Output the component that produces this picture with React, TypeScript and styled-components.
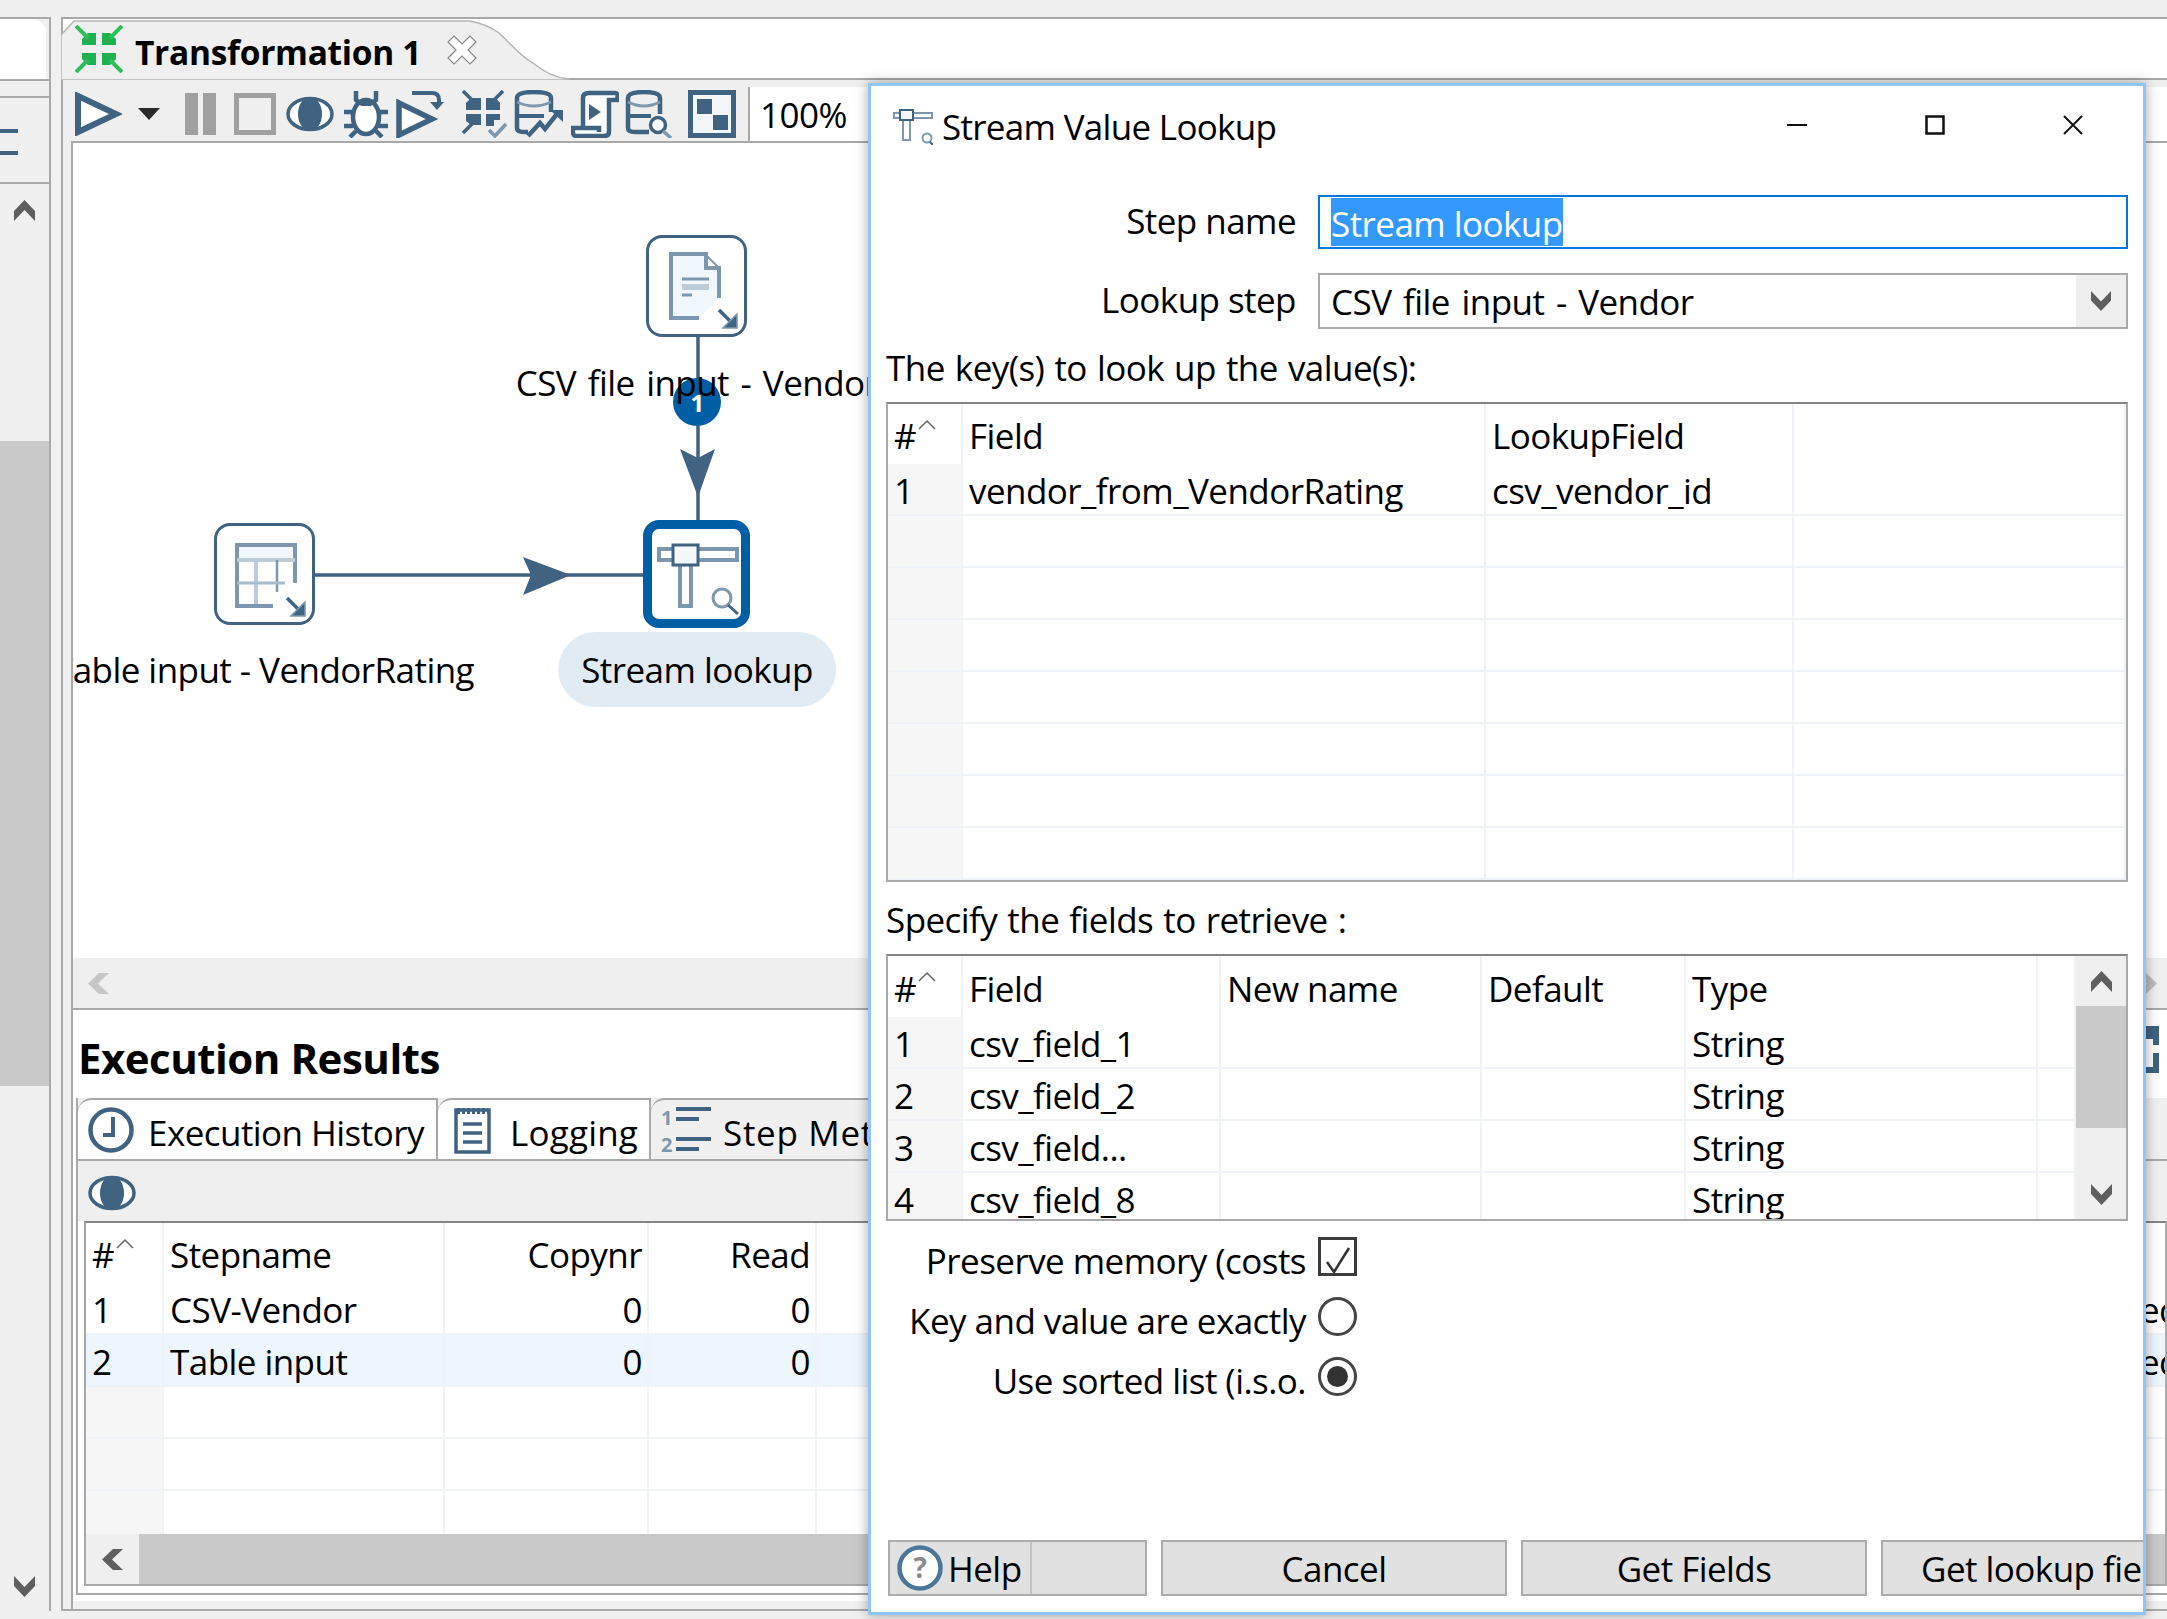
import React from "react";
import styled, { createGlobalStyle } from "styled-components";

const STEEL = "#3f6380";
const PALE = "#7d98ae";
const LINE = "#a9a9a9";
const SOFT = "#eff2f6";

const GlobalStyle = createGlobalStyle`
  html, body {
    margin: 0;
    padding: 0;
    overflow: hidden;
    background: #f0f0f0;
  }
  * {
    box-sizing: border-box;
  }
  body {
    font-family: "Open Sans", "Noto Sans", sans-serif;
    font-size: 35px;
    letter-spacing: -0.55px;
    color: #000;
  }
`;

const Screen = styled.div`
  position: relative;
  width: 2167px;
  height: 1619px;
  display: flex;
  padding: 17px 0 8px;
  overflow: hidden;
  background: #f0f0f0;
`;

/* left rail */
const Sidebar = styled.div`
  width: 51px;
  margin-right: 10px;
  display: flex;
  flex-direction: column;
  border-right: 2px solid ${LINE};
  border-top: 2px solid ${LINE};
  flex: none;
`;

const SideTab = styled.div`
  height: 60px;
  width: 46px;
  background: #fff;
  border-top-right-radius: 14px;
`;

const SideBand = styled.div`
  height: 19px;
  border-top: 2px solid ${LINE};
  border-bottom: 2px solid ${LINE};
`;

const SideBars = styled.div`
  height: 86px;
  padding-top: 31px;
  display: flex;
  flex-direction: column;
  gap: 18px;
  border-bottom: 2px solid ${LINE};
`;

const SideBar = styled.div`
  width: 18px;
  height: 4px;
  background: ${STEEL};
`;

const SideScroll = styled.div`
  flex: 1;
  display: flex;
  flex-direction: column;
  align-items: center;
  padding: 16px 0 14px;
`;

const SideThumb = styled.div`
  width: 100%;
  height: 645px;
  margin-top: 220px;
  background: #c9c9c9;
`;

const Push = styled.div`
  flex: 1;
`;

/* main perspective */
const Main = styled.div`
  flex: 1;
  min-width: 0;
  display: flex;
  flex-direction: column;
  border-top: 2px solid ${LINE};
  border-left: 2px solid ${LINE};
  border-bottom: 2px solid ${LINE};
`;

const TabStrip = styled.div`
  position: relative;
  height: 61px;
  flex: none;
  background: #fff;
  border-bottom: 2px solid ${LINE};
`;

const TabShape = styled.svg`
  position: absolute;
  left: -2px;
  top: 0;
`;

const TabLabel = styled.div`
  position: relative;
  height: 59px;
  display: flex;
  align-items: center;
  padding-left: 12px;
`;

const TabTitle = styled.span`
  margin: 7px 0 0 12px;
  font-weight: 700;
  font-size: 33.5px;
  letter-spacing: -0.3px;
`;

const TabClose = styled.svg`
  margin-left: 26px;
  margin-top: 2px;
`;

const Toolbar = styled.div`
  height: 61px;
  flex: none;
  display: flex;
  align-items: center;
  padding: 7px 0 0 12px;
  background: #efefef;
`;

const ToolSlot = styled.div<{ $gap: number }>`
  margin-left: ${(p) => p.$gap}px;
  display: flex;
  align-items: center;
`;

const ZoomBox = styled.div`
  flex: 1;
  height: 100%;
  margin-left: 12px;
  padding-left: 10px;
  display: flex;
  align-items: center;
  background: #fff;
  border-left: 2px solid ${LINE};
`;

const Editor = styled.div`
  flex: 1;
  min-height: 0;
  margin-left: 8px;
  display: flex;
  flex-direction: column;
  border-top: 2px solid ${LINE};
  border-left: 2px solid ${LINE};
`;

/* graph canvas */
const Canvas = styled.div`
  position: relative;
  height: 815px;
  flex: none;
  background: #fff;
  overflow: hidden;
`;

const Wires = styled.svg`
  position: absolute;
  left: 0;
  top: 0;
`;

const StepBox = styled.div<{ $x: number; $y: number; $active?: boolean }>`
  position: absolute;
  left: ${(p) => p.$x}px;
  top: ${(p) => p.$y}px;
  width: ${(p) => (p.$active ? 107 : 101)}px;
  height: ${(p) => (p.$active ? 108 : 102)}px;
  border-radius: 16px;
  background: #fff;
  border: ${(p) => (p.$active ? `9px solid #005ea4` : `3px solid ${STEEL}`)};
`;

const StepGlyph = styled.svg`
  position: absolute;
  left: 0;
  top: 0;
  display: block;
`;

const StepLabel = styled.div<{ $x: number; $y: number; $pill?: boolean; $wide?: boolean }>`
  position: absolute;
  left: ${(p) => p.$x}px;
  top: ${(p) => p.$y}px;
  transform: translateX(-50%);
  height: 75px;
  padding: 0 23px;
  display: flex;
  align-items: center;
  white-space: nowrap;
  word-spacing: ${(p) => (p.$wide ? 3 : 0)}px;
  border-radius: 38px;
  background: ${(p) => (p.$pill ? "#e1ebf4" : "transparent")};
`;

const HopBadge = styled.div`
  position: absolute;
  left: 600px;
  top: 235px;
  width: 48px;
  height: 48px;
  border-radius: 50%;
  background: #005ea4;
  color: #fff;
  font-size: 24px;
  font-weight: 700;
  display: flex;
  align-items: center;
  justify-content: center;
`;

const HScroll = styled.div`
  height: 50px;
  flex: none;
  padding: 0 10px 0 15px;
  display: flex;
  align-items: center;
  justify-content: space-between;
  background: #efefef;
`;

/* execution results */
const Results = styled.div`
  flex: 1;
  min-height: 0;
  margin-bottom: 8px;
  display: flex;
  flex-direction: column;
  padding: 0 0 6px 3px;
  background: #fff;
  border-top: 2px solid ${LINE};
`;

const ResultsHead = styled.div`
  height: 88px;
  flex: none;
  display: flex;
  align-items: center;
  justify-content: space-between;
  padding: 0 8px 0 2px;
`;

const ResultsTitle = styled.h2`
  margin: 7px 0 0;
  font-size: 42px;
  font-weight: 700;
  letter-spacing: -0.5px;
`;

const MaxIcon = styled.svg`
  margin-bottom: 9px;
`;

const ResultsFrame = styled.div`
  flex: 1;
  min-height: 0;
  display: flex;
  flex-direction: column;
  border-left: 2px solid ${LINE};
  border-bottom: 2px solid ${LINE};
  padding-bottom: 7px;
`;

const ResultTabs = styled.div`
  height: 63px;
  flex: none;
  display: flex;
  background: #f0f0f0;
  border-bottom: 2px solid ${LINE};
`;

const ResultTab = styled.div<{ $w: number; $pad: number; $gap: number; $on?: boolean }>`
  width: ${(p) => p.$w}px;
  flex: none;
  display: flex;
  align-items: center;
  gap: ${(p) => p.$gap}px;
  padding-left: ${(p) => p.$pad}px;
  background: ${(p) => (p.$on ? "#fff" : "#f0f0f0")};
  border-top: 2px solid ${LINE};
  border-right: ${(p) => (p.$on ? `2px solid ${LINE}` : "none")};
  border-top-left-radius: 14px;
  white-space: nowrap;
`;

const TabText = styled.span<{ $spacing?: number }>`
  margin-top: 5px;
  letter-spacing: ${(p) => p.$spacing ?? -0.55}px;
`;

const ResultBar = styled.div`
  height: 60px;
  flex: none;
  padding: 4px 0 0 10px;
  display: flex;
  align-items: center;
  background: #efefef;
`;

/* tables */
const Table = styled.div<{ $h: number; $inset?: number; $stack?: boolean }>`
  height: ${(p) => p.$h}px;
  margin-left: ${(p) => p.$inset ?? 0}px;
  flex: none;
  display: flex;
  flex-direction: ${(p) => (p.$stack ? "column" : "row")};
  background: #fff;
  border: 2px solid ${LINE};
  border-top-color: #858585;
  overflow: hidden;
`;

const TableBody = styled.div`
  flex: 1;
  min-width: 0;
  min-height: 0;
  overflow: hidden;
`;

const Row = styled.div<{ $cols: string; $h: number; $on?: boolean }>`
  height: ${(p) => p.$h}px;
  display: grid;
  grid-template-columns: ${(p) => p.$cols};
  background: ${(p) => (p.$on ? "#edf6fd" : "transparent")};
`;

const Cell = styled.div<{ $right?: boolean; $index?: boolean; $head?: boolean }>`
  display: flex;
  align-items: center;
  justify-content: ${(p) => (p.$right ? "flex-end" : "flex-start")};
  padding: 3px 5px 0 6px;
  white-space: nowrap;
  overflow: hidden;
  border-right: 2px solid ${SOFT};
  border-bottom: ${(p) => (p.$head ? "none" : `2px solid ${SOFT}`)};
  background: ${(p) => (p.$index ? "#f6f6f6" : "transparent")};
`;

const SortMark = styled.svg`
  margin: 0 0 22px 2px;
`;

const VScroll = styled.div`
  width: 50px;
  flex: none;
  display: flex;
  flex-direction: column;
  align-items: center;
  background: #efefef;
`;

const VArrow = styled.div`
  height: 50px;
  flex: none;
  display: flex;
  align-items: center;
`;

const VThumb = styled.div`
  width: 100%;
  height: 122px;
  background: #c9c9c9;
`;

const TableHScroll = styled.div`
  height: 50px;
  flex: none;
  display: flex;
  background: #c9c9c9;
`;

const HArrow = styled.div`
  width: 53px;
  padding-left: 16px;
  display: flex;
  align-items: center;
  background: #efefef;
`;

/* dialog */
const Dialog = styled.div`
  position: absolute;
  left: 868px;
  top: 83px;
  width: 1278px;
  height: 1532px;
  display: flex;
  flex-direction: column;
  padding: 0 15px;
  overflow: hidden;
  background: #fff;
  border: 3px solid #8fc6f7;
  box-shadow: 0 0 12px rgba(0, 0, 0, 0.35);
`;

const DialogTitle = styled.div`
  height: 81px;
  flex: none;
  display: flex;
  align-items: center;
  padding-left: 7px;
  margin-bottom: 28px;
`;

const TitleText = styled.span`
  margin-left: 9px;
  letter-spacing: -0.7px;
`;

const WinButtons = styled.div`
  margin: 0 44px 4px auto;
  display: flex;
  align-items: center;
  gap: 117px;
`;

const FormRow = styled.div<{ $h: number; $mb: number }>`
  height: ${(p) => p.$h}px;
  margin-bottom: ${(p) => p.$mb}px;
  flex: none;
  display: grid;
  grid-template-columns: 420px 1fr;
  column-gap: 12px;
`;

const FormLabel = styled.div<{ $inset?: number; $lift?: number }>`
  display: flex;
  align-items: center;
  justify-content: flex-end;
  padding: 0 ${(p) => p.$inset ?? 0}px ${(p) => p.$lift ?? 3}px 0;
  white-space: nowrap;
`;

const TextBox = styled.div`
  display: flex;
  align-items: center;
  padding-left: 11px;
  border: 2px solid #0078d7;
`;

const Selected = styled.span`
  height: 48px;
  padding-top: 2px;
  display: flex;
  align-items: center;
  background: #3399ff;
  color: #fff;
`;

const Combo = styled.div`
  display: flex;
  align-items: center;
  justify-content: space-between;
  padding-left: 11px;
  word-spacing: 3px;
  border: 2px solid ${LINE};
`;

const ComboArrow = styled.div`
  width: 50px;
  height: 100%;
  display: flex;
  align-items: center;
  justify-content: center;
  background: #efefef;
`;

const SectionLabel = styled.div<{ $h: number; $top: number }>`
  height: ${(p) => p.$h}px;
  padding-top: ${(p) => p.$top}px;
  flex: none;
  display: flex;
  align-items: center;
  white-space: nowrap;
  word-spacing: 1.5px;
`;

const Options = styled.div`
  margin-top: 16px;
  flex: none;
  display: flex;
  flex-direction: column;
  gap: 21px;
`;

const OptionRow = styled.div`
  height: 39px;
  display: grid;
  grid-template-columns: 420px 40px;
  column-gap: 12px;
`;

const Check = styled.div`
  width: 39px;
  height: 39px;
  border: 3px solid #3c3c3c;
`;

const Radio = styled.div<{ $on?: boolean }>`
  width: 39px;
  height: 39px;
  border: 3px solid #454545;
  border-radius: 50%;
  display: flex;
  align-items: center;
  justify-content: center;
  &::after {
    content: "";
    width: 21px;
    height: 21px;
    border-radius: 50%;
    background: ${(p) => (p.$on ? "#333" : "transparent")};
  }
`;

const ButtonRow = styled.div`
  margin: auto 0 16px 2px;
  height: 56px;
  flex: none;
  display: flex;
  gap: 14px;
`;

const Button = styled.div<{ $w: number }>`
  width: ${(p) => p.$w}px;
  flex: none;
  display: flex;
  align-items: center;
  justify-content: center;
  white-space: nowrap;
  background: #e1e1e1;
  border: 2px solid #adadad;
`;

const HelpPart = styled.div`
  width: 142px;
  height: 100%;
  margin-right: auto;
  padding-left: 7px;
  display: flex;
  align-items: center;
  gap: 5px;
  border-right: 2px solid #c4c4c4;
`;

const ChevronSvg = styled.svg<{ $turn: number }>`
  display: block;
  transform: rotate(${(p) => p.$turn}deg);
`;

/* icons */
const Chevron = ({ dir = "up", color = "#5f5f5f", size = 21 }: { dir?: "up" | "down" | "left" | "right"; color?: string; size?: number }) => {
  const turn = { up: 0, down: 180, left: 270, right: 90 }[dir];
  return (
    <ChevronSvg $turn={turn} width={size} height={size} viewBox="0 0 21 21">
      <path d="M10.5 0 L21 11 V21 L10.5 10 L0 21 V11 Z" fill={color} />
    </ChevronSvg>
  );
};

const Sort = () => (
  <SortMark width="18" height="12" viewBox="0 0 18 12">
    <path d="M1 10 L9 2 L17 10" fill="none" stroke="#666" strokeWidth="1.5" />
  </SortMark>
);

const Logo = () => (
  <svg width="48" height="48" viewBox="0 0 48 48">
    <path
      d="M13 8 H21 V20 H7 V14Z M27 8 H35 L41 14 V20 H27Z M7 28 H21 V40 H13 L7 34Z M27 28 H41 V34 L35 40 H27Z"
      fill="#1fb14f"
    />
    <path d="M1 1 L13 13 M47 1 L35 13 M1 47 L13 35 M47 47 L35 35" stroke="#2cbf5c" strokeWidth="4" fill="none" />
  </svg>
);

const RunIcon = () => (
  <svg width="47" height="44" viewBox="0 0 47 44">
    <path d="M3 4 L41 22 L3 40Z" fill="#fff" stroke={STEEL} strokeWidth="6" />
  </svg>
);

const DropIcon = () => (
  <svg width="22" height="12" viewBox="0 0 22 12">
    <path d="M0 0 H22 L11 12Z" fill="#2b2b2b" />
  </svg>
);

const PauseIcon = () => (
  <svg width="31" height="42" viewBox="0 0 31 42">
    <path d="M0 0 H13 V42 H0Z M18 0 H31 V42 H18Z" fill="#a0a0a0" />
  </svg>
);

const StopIcon = () => (
  <svg width="42" height="42" viewBox="0 0 42 42">
    <rect x="2.5" y="2.5" width="37" height="37" fill="none" stroke="#a0a0a0" strokeWidth="5" />
  </svg>
);

const EyeIcon = () => (
  <svg width="48" height="36" viewBox="0 0 48 36">
    <ellipse cx="24" cy="18" rx="22" ry="15.5" fill="#fff" stroke={STEEL} strokeWidth="3.5" />
    <ellipse cx="24" cy="18" rx="12" ry="17" fill={STEEL} />
  </svg>
);

const BugIcon = () => (
  <svg width="48" height="48" viewBox="0 0 48 48">
    <g stroke={STEEL} strokeWidth="4.5" fill="none">
      <path d="M14 1 V10 L19 14 M34 1 V10 L29 14 M2 22 H9 L13 26 M46 22 H39 L35 26 M2 36 H10 L14 33 M46 36 H38 L34 33 M8 47 L14 41 M40 47 L34 41" />
    </g>
    <ellipse cx="24" cy="27" rx="13" ry="17" fill="#fff" stroke={STEEL} strokeWidth="4.5" />
    <path d="M16 13 Q24 3 32 13 L29 16 H19Z" fill={STEEL} />
  </svg>
);

const StepRunIcon = () => (
  <svg width="48" height="48" viewBox="0 0 48 48">
    <path d="M3 13 L36 29 L3 45Z" fill="#fff" stroke={STEEL} strokeWidth="5.5" />
    <path d="M16 3 H36 Q43 3 43 10 V14" fill="none" stroke={STEEL} strokeWidth="4" />
    <path d="M34 12 H48 L41 20Z" fill={STEEL} />
  </svg>
);

const CheckIcon = () => (
  <svg width="46" height="48" viewBox="0 0 46 48">
    <path d="M9 8 H19 V20 H4 V13Z M24 8 H34 L38 13 V20 H24Z M4 24 H19 V35 H9 L4 31Z M24 24 H38 V30 H32 V36 H24Z" fill={STEEL} />
    <path d="M1 1 L11 11 M41 1 L31 11 M1 43 L11 33" stroke={STEEL} strokeWidth="3.5" fill="none" />
    <path d="M27 40 L33 46 L44 34" stroke={PALE} strokeWidth="3.5" fill="none" />
  </svg>
);

const DbArrowIcon = () => (
  <svg width="49" height="48" viewBox="0 0 49 48">
    <path d="M3 8 Q3 2 20 2 Q37 2 37 8 V22 M3 8 V38 Q3 42 10 42 H14" fill="none" stroke={STEEL} strokeWidth="4.5" />
    <path d="M3 12 Q20 20 37 12" fill="none" stroke={PALE} strokeWidth="3" />
    <path d="M4 26 H30" stroke={STEEL} strokeWidth="4" />
    <path d="M14 46 L26 33 L31 39 L43 24" fill="none" stroke={STEEL} strokeWidth="4.5" />
    <path d="M36 20 H49 V32Z" fill={STEEL} />
  </svg>
);

const ScriptIcon = () => (
  <svg width="48" height="48" viewBox="0 0 48 48">
    <path d="M12 36 V8 Q12 3 18 3 H44 Q48 3 46 10 H38 V42 Q38 46 33 46 H5 Q1 46 2 38 H28 V42" fill="#fff" stroke={STEEL} strokeWidth="4.5" />
    <path d="M18 14 L30 22 L18 30Z" fill={STEEL} />
  </svg>
);

const DbFindIcon = () => (
  <svg width="48" height="48" viewBox="0 0 48 48">
    <path d="M3 8 Q3 2 19 2 Q35 2 35 8 V24 M3 8 V38 Q3 42 10 42 H24" fill="none" stroke={STEEL} strokeWidth="4.5" />
    <path d="M3 12 Q19 20 35 12" fill="none" stroke={PALE} strokeWidth="3" />
    <path d="M4 26 H26" stroke={STEEL} strokeWidth="4" />
    <circle cx="33" cy="35" r="7.5" fill="#fff" stroke={STEEL} strokeWidth="3.5" />
    <path d="M38 41 L46 48" stroke={PALE} strokeWidth="3.5" />
  </svg>
);

const GridIcon = () => (
  <svg width="48" height="48" viewBox="0 0 48 48">
    <rect x="2.5" y="2.5" width="43" height="43" fill="#f3f6f9" stroke={STEEL} strokeWidth="5" />
    <rect x="9" y="9" width="15" height="15" fill={STEEL} />
    <rect x="25" y="25" width="15" height="15" fill={STEEL} />
  </svg>
);

const ClockIcon = () => (
  <svg width="46" height="48" viewBox="0 0 46 48">
    <circle cx="23" cy="24" r="20.5" fill="#fff" stroke={STEEL} strokeWidth="4.5" />
    <path d="M25 11 V29 H15" fill="none" stroke={STEEL} strokeWidth="4" />
  </svg>
);

const LogIcon = () => (
  <svg width="37" height="48" viewBox="0 0 37 48">
    <rect x="2" y="4" width="33" height="42" fill="#fff" stroke={STEEL} strokeWidth="3.5" />
    <path d="M3 5 H34" stroke={STEEL} strokeWidth="6" strokeDasharray="3 2" />
    <path d="M9 18 H28 M9 27 H28 M9 36 H28" stroke={STEEL} strokeWidth="3.5" />
  </svg>
);

const MetricsIcon = () => (
  <svg width="50" height="50" viewBox="0 0 50 50">
    <text x="0" y="20" fontSize="20" fontWeight="700" fill={PALE} fontFamily="Open Sans">1</text>
    <text x="0" y="47" fontSize="20" fontWeight="700" fill={PALE} fontFamily="Open Sans">2</text>
    <path d="M15 4 H50" stroke={STEEL} strokeWidth="4" />
    <path d="M15 14 H38" stroke={STEEL} strokeWidth="4" />
    <path d="M15 34 H50" stroke={STEEL} strokeWidth="4" />
    <path d="M15 44 H38" stroke={STEEL} strokeWidth="4" />
  </svg>
);

const CornerArrow = ({ x, y }: { x: number; y: number }) => (
  <g transform={`translate(${x} ${y})`}>
    <path d="M1 1 L15 15" stroke={STEEL} strokeWidth="3.5" />
    <path d="M5 19 H19 V5 Z" fill={STEEL} stroke={PALE} strokeWidth="1.5" />
  </g>
);

const CsvGlyph = () => (
  <StepGlyph width="96" height="96" viewBox="0 0 96 96">
    <path d="M22 16 H57 V30 H70 V60 L50 81 H22Z" fill="#f0f8fe" />
    <path d="M50 80 H22 V16 H57 V30 H70 V60" fill="none" stroke={PALE} strokeWidth="4" />
    <path d="M57 17 L70 30" stroke={PALE} strokeWidth="2" />
    <path d="M33 41 H60" stroke={PALE} strokeWidth="3" />
    <path d="M33 49 H60" stroke="#bccdd9" strokeWidth="6" />
    <path d="M33 57 H43" stroke={PALE} strokeWidth="3" />
    <CornerArrow x={69} y={71} />
  </StepGlyph>
);

const TableGlyph = () => (
  <StepGlyph width="96" height="96" viewBox="0 0 96 96">
    <rect x="19" y="19" width="59" height="14" fill="#f0f8fe" />
    <path d="M56 80 H20 V19 H78 V57" fill="none" stroke={PALE} strokeWidth="4" />
    <path d="M20 34 H78" stroke="#bccdd9" strokeWidth="4" />
    <path d="M39 34 V78" stroke="#bccdd9" strokeWidth="4" />
    <path d="M60 34 V66" stroke={PALE} strokeWidth="2.5" />
    <path d="M20 57 H68" stroke="#a9bccb" strokeWidth="3" />
    <CornerArrow x={69} y={71} />
  </StepGlyph>
);

const LookupGlyph = () => (
  <StepGlyph width="90" height="90" viewBox="0 0 90 90">
    <rect x="7" y="20" width="78" height="11" fill="#fff" stroke={PALE} strokeWidth="4" />
    <rect x="28" y="33" width="11" height="44" fill="#fff" stroke={PALE} strokeWidth="4" />
    <rect x="21" y="16" width="25" height="20" fill="#f4f8fb" stroke={STEEL} strokeWidth="3" />
    <circle cx="70" cy="69" r="9" fill="#fff" stroke={PALE} strokeWidth="3" />
    <path d="M76 76 L86 85" stroke={STEEL} strokeWidth="3" />
  </StepGlyph>
);

const TitleIcon = () => (
  <svg width="40" height="36" viewBox="0 0 40 36">
    <rect x="1" y="4" width="38" height="5" fill="#fff" stroke={PALE} strokeWidth="2" />
    <rect x="10" y="11" width="7" height="20" fill="#fff" stroke={PALE} strokeWidth="2" />
    <rect x="7" y="1" width="13" height="10" fill="#f4f8fb" stroke={STEEL} strokeWidth="2" />
    <circle cx="34" cy="29" r="4.5" fill="#fff" stroke={PALE} strokeWidth="2" />
    <path d="M37 33 L40 36" stroke={STEEL} strokeWidth="2" />
  </svg>
);

const HelpIcon = () => (
  <svg width="46" height="46" viewBox="0 0 46 46">
    <circle cx="23" cy="23" r="20.5" fill="#fff" stroke="#4c7696" strokeWidth="4.5" />
    <text x="23" y="33" textAnchor="middle" fontSize="28" fontWeight="700" fill="#8a8a8a" fontFamily="Open Sans">?</text>
  </svg>
);

const keyCols = "75px 523px 308px 1fr";
const fieldCols = "75px 258px 261px 204px 352px 1fr";
const runCols = "78px 281px 204px 168px 1317px 200px";

const keyRows = [["1", "vendor_from_VendorRating", "csv_vendor_id", ""], ...Array.from({ length: 7 }, () => ["", "", "", ""])];
const fieldRows = [
  ["1", "csv_field_1", "", "", "String", ""],
  ["2", "csv_field_2", "", "", "String", ""],
  ["3", "csv_field...", "", "", "String", ""],
  ["4", "csv_field_8", "", "", "String", ""],
];
const runRows = [
  ["1", "CSV-Vendor", "0", "0", "", "ed"],
  ["2", "Table input", "0", "0", "", "ed"],
  ["", "", "", "", "", ""],
  ["", "", "", "", "", ""],
  ["", "", "", "", "", ""],
];

const tools = [
  { gap: 0, icon: <RunIcon /> },
  { gap: 16, icon: <DropIcon /> },
  { gap: 25, icon: <PauseIcon /> },
  { gap: 18, icon: <StopIcon /> },
  { gap: 10, icon: <EyeIcon /> },
  { gap: 8, icon: <BugIcon /> },
  { gap: 6, icon: <StepRunIcon /> },
  { gap: 18, icon: <CheckIcon /> },
  { gap: 6, icon: <DbArrowIcon /> },
  { gap: 8, icon: <ScriptIcon /> },
  { gap: 6, icon: <DbFindIcon /> },
  { gap: 15, icon: <GridIcon /> },
];

const App = () => (
  <>
    <GlobalStyle />
    <Screen>
      <Sidebar>
        <SideTab />
        <SideBand />
        <SideBars>
          <SideBar />
          <SideBar />
        </SideBars>
        <SideScroll>
          <Chevron />
          <SideThumb />
          <Push />
          <Chevron dir="down" />
        </SideScroll>
      </Sidebar>

      <Main>
        <TabStrip>
          <TabShape width="520" height="61" viewBox="0 0 520 61">
            <path
              d="M0 61 V16 L13 2 H409 C420 4 430 8 438 14 C450 25 460 38 472 44 C485 54 495 59 508 60 V61Z"
              fill="#efefef"
              stroke="#b5b5b5"
              strokeWidth="1.5"
            />
          </TabShape>
          <TabLabel>
            <Logo />
            <TabTitle>Transformation 1</TabTitle>
            <TabClose width="30" height="30" viewBox="0 0 30 30">
              <path d="M7 1 L15 9 L23 1 L29 7 L21 15 L29 23 L23 29 L15 21 L7 29 L1 23 L9 15 L1 7Z" fill="#fff" stroke="#8a8a8a" strokeWidth="1.2" />
            </TabClose>
          </TabLabel>
        </TabStrip>
        <Toolbar>
          {tools.map((t, i) => (
            <ToolSlot key={i} $gap={t.gap}>
              {t.icon}
            </ToolSlot>
          ))}
          <ZoomBox>100%</ZoomBox>
        </Toolbar>

        <Editor>
          <Canvas>
            <Wires width="2094" height="815" viewBox="0 0 2094 815">
              <g stroke={STEEL} strokeWidth="3.5">
                <path d="M625 190 V380 M241 432 H575" />
              </g>
              <path d="M607 306 L625 315 L642 306 L625 354Z" fill={STEEL} />
              <path d="M450 414 L498 432 L450 452 L458 432Z" fill={STEEL} />
            </Wires>
            <StepBox $x={573} $y={92}>
              <CsvGlyph />
            </StepBox>
            <StepBox $x={141} $y={380}>
              <TableGlyph />
            </StepBox>
            <StepBox $x={570} $y={377} $active>
              <LookupGlyph />
            </StepBox>
            <HopBadge>1</HopBadge>
            <StepLabel $x={624} $y={202} $wide>CSV file input - Vendor</StepLabel>
            <StepLabel $x={191} $y={489}>Table input - VendorRating</StepLabel>
            <StepLabel $x={624} $y={489} $pill>Stream lookup</StepLabel>
          </Canvas>
          <HScroll>
            <Chevron dir="left" color="#c6c6c6" />
            <Chevron dir="right" color="#bcbcbc" />
          </HScroll>
          <Results>
            <ResultsHead>
              <ResultsTitle>Execution Results</ResultsTitle>
              <MaxIcon width="13" height="47" viewBox="0 0 13 47">
                <path d="M0 0 H13 V19 H7 V13 H0Z" fill={STEEL} />
                <path d="M7 27 H13 V47 H0 V41 H7Z" fill={STEEL} />
              </MaxIcon>
            </ResultsHead>
            <ResultsFrame>
              <ResultTabs>
                <ResultTab $w={360} $pad={10} $gap={14} $on>
                  <ClockIcon />
                  <TabText>Execution History</TabText>
                </ResultTab>
                <ResultTab $w={213} $pad={16} $gap={19} $on>
                  <LogIcon />
                  <TabText $spacing={0.2}>Logging</TabText>
                </ResultTab>
                <ResultTab $w={400} $pad={10} $gap={12}>
                  <MetricsIcon />
                  <TabText $spacing={0.7}>Step Metrics</TabText>
                </ResultTab>
              </ResultTabs>
              <ResultBar>
                <EyeIcon />
              </ResultBar>
              <Table $h={365} $inset={6} $stack>
                <TableBody>
                  <Row $cols={runCols} $h={60}>
                    <Cell $head>
                      #<Sort />
                    </Cell>
                    <Cell $head>Stepname</Cell>
                    <Cell $head $right>Copynr</Cell>
                    <Cell $head $right>Read</Cell>
                    <Cell $head />
                    <Cell $head />
                  </Row>
                  {runRows.map((r, i) => (
                    <Row key={i} $cols={runCols} $h={52} $on={i === 1}>
                      <Cell $index={!r[0]}>{r[0]}</Cell>
                      <Cell>{r[1]}</Cell>
                      <Cell $right>{r[2]}</Cell>
                      <Cell $right>{r[3]}</Cell>
                      <Cell>{r[4]}</Cell>
                      <Cell>{r[5]}</Cell>
                    </Row>
                  ))}
                </TableBody>
                <TableHScroll>
                  <HArrow>
                    <Chevron dir="left" />
                  </HArrow>
                </TableHScroll>
              </Table>
            </ResultsFrame>
          </Results>
        </Editor>
      </Main>

      <Dialog>
        <DialogTitle>
          <TitleIcon />
          <TitleText>Stream Value Lookup</TitleText>
          <WinButtons>
            <svg width="22" height="22" viewBox="0 0 22 22">
              <path d="M1 11 H21" stroke="#111" strokeWidth="2" />
            </svg>
            <svg width="20" height="20" viewBox="0 0 20 20">
              <rect x="1.5" y="1.5" width="17" height="17" fill="none" stroke="#111" strokeWidth="2.5" />
            </svg>
            <svg width="22" height="22" viewBox="0 0 22 22">
              <path d="M2 2 L20 20 M20 2 L2 20" stroke="#111" strokeWidth="2" />
            </svg>
          </WinButtons>
        </DialogTitle>

        <FormRow $h={54} $mb={24}>
          <FormLabel $inset={10}>Step name</FormLabel>
          <TextBox>
            <Selected>Stream lookup</Selected>
          </TextBox>
        </FormRow>
        <FormRow $h={56} $mb={0}>
          <FormLabel $inset={10}>Lookup step</FormLabel>
          <Combo>
            CSV file input - Vendor
            <ComboArrow>
              <Chevron dir="down" size={20} />
            </ComboArrow>
          </Combo>
        </FormRow>
        <SectionLabel $h={73} $top={3}>The key(s) to look up the value(s):</SectionLabel>
        <Table $h={480}>
          <TableBody>
            <Row $cols={keyCols} $h={60}>
              <Cell $head>
                #<Sort />
              </Cell>
              <Cell $head>Field</Cell>
              <Cell $head>LookupField</Cell>
              <Cell $head />
            </Row>
            {keyRows.map((r, i) => (
              <Row key={i} $cols={keyCols} $h={52}>
                <Cell $index>{r[0]}</Cell>
                <Cell>{r[1]}</Cell>
                <Cell>{r[2]}</Cell>
                <Cell>{r[3]}</Cell>
              </Row>
            ))}
          </TableBody>
        </Table>
        <SectionLabel $h={72} $top={2}>Specify the fields to retrieve :</SectionLabel>
        <Table $h={267}>
          <TableBody>
            <Row $cols={fieldCols} $h={61}>
              <Cell $head>
                #<Sort />
              </Cell>
              <Cell $head>Field</Cell>
              <Cell $head>New name</Cell>
              <Cell $head>Default</Cell>
              <Cell $head>Type</Cell>
              <Cell $head />
            </Row>
            {fieldRows.map((r, i) => (
              <Row key={i} $cols={fieldCols} $h={52}>
                <Cell $index>{r[0]}</Cell>
                <Cell>{r[1]}</Cell>
                <Cell>{r[2]}</Cell>
                <Cell>{r[3]}</Cell>
                <Cell>{r[4]}</Cell>
                <Cell>{r[5]}</Cell>
              </Row>
            ))}
          </TableBody>
          <VScroll>
            <VArrow>
              <Chevron />
            </VArrow>
            <VThumb />
            <Push />
            <VArrow>
              <Chevron dir="down" />
            </VArrow>
          </VScroll>
        </Table>

        <Options>
          <OptionRow>
            <FormLabel $lift={6}>Preserve memory (costs</FormLabel>
            <Check>
              <svg width="33" height="33" viewBox="0 0 33 33">
                <path d="M6 18 L13 28 L28 4" fill="none" stroke="#333" strokeWidth="2.5" />
              </svg>
            </Check>
          </OptionRow>
          <OptionRow>
            <FormLabel $lift={6}>Key and value are exactly</FormLabel>
            <Radio />
          </OptionRow>
          <OptionRow>
            <FormLabel $lift={6}>Use sorted list (i.s.o.</FormLabel>
            <Radio $on />
          </OptionRow>
        </Options>

        <ButtonRow>
          <Button $w={259}>
            <HelpPart>
              <HelpIcon />
              Help
            </HelpPart>
          </Button>
          <Button $w={346}>Cancel</Button>
          <Button $w={346}>Get Fields</Button>
          <Button $w={346}>Get lookup fields</Button>
        </ButtonRow>
      </Dialog>
    </Screen>
  </>
);

export default App;
